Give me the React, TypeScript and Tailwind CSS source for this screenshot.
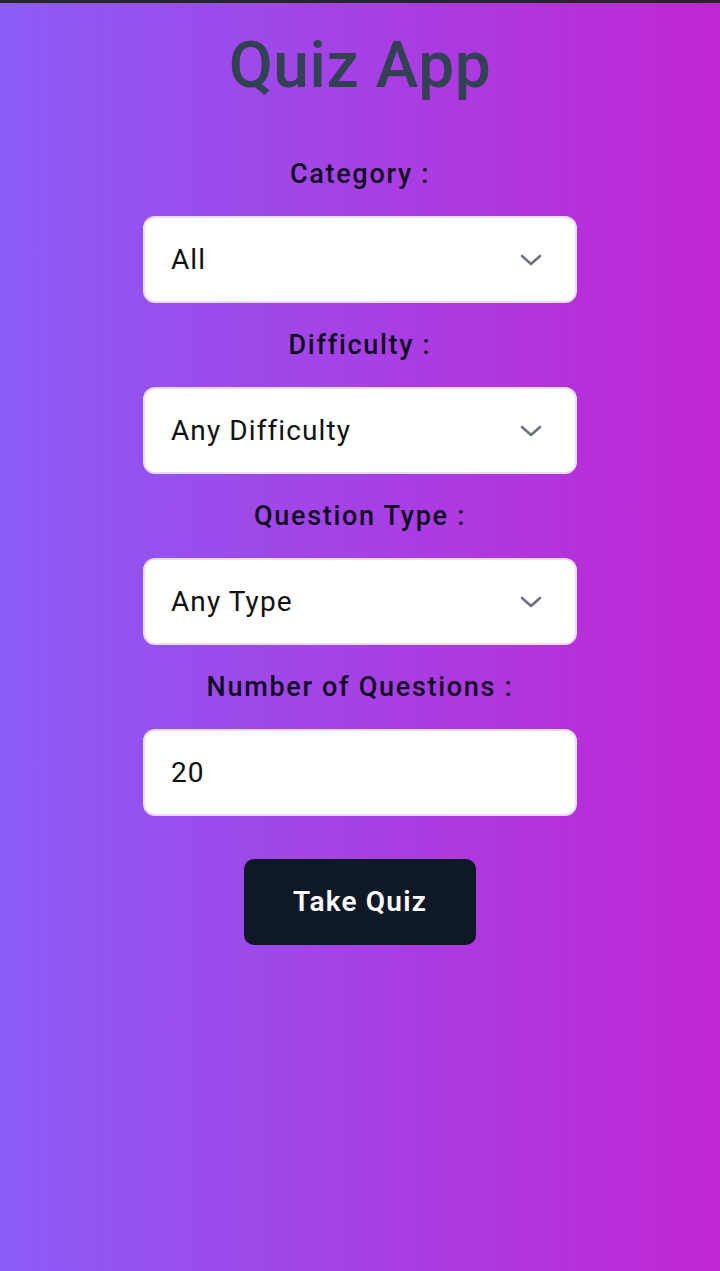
import React from "react";

const font = { fontFamily: "Roboto, 'Noto Sans', sans-serif" };

function Chevron() {
  return (
    <svg width="22" height="12" viewBox="0 0 22 12" className="shrink-0">
      <path
        d="M2 2 L11 10 L20 2"
        fill="none"
        stroke="#6b7280"
        strokeWidth="2.6"
        strokeLinecap="round"
        strokeLinejoin="round"
      />
    </svg>
  );
}

function Field({ label, value, select }: { label: string; value: string; select?: boolean }) {
  return (
    <div className="flex flex-col items-center gap-6">
      <label className="text-[27px] leading-[36px] font-medium tracking-[1.7px] text-[#120a24]">{label}</label>
      <div className="w-[434px] h-[87px] bg-white rounded-xl border-2 border-[#e8dcf8] flex items-center justify-between pl-[26px] pr-[33px]">
        <span className="text-[28px] tracking-[1.1px] text-[#111]">{value}</span>
        {select && <Chevron />}
      </div>
    </div>
  );
}

export default function App() {
  return (
    <div
      className="min-h-[1271px] bg-[linear-gradient(to_right,#8b5cf6,#c026d3)] flex flex-col items-center"
      style={font}
    >
      <div className="w-full h-[3px] bg-[#262626]" />
      <h1 className="mt-[31px] text-[64px] leading-[64px] font-medium tracking-[0.6px] text-[#334155]">Quiz App</h1>

      <div className="mt-[58px] flex flex-col gap-6">
        <Field label="Category :" value="All" select />
        <Field label="Difficulty :" value="Any Difficulty" select />
        <Field label="Question Type :" value="Any Type" select />
        <Field label="Number of Questions :" value="20" />
      </div>

      <button className="mt-[43px] w-[232px] h-[86px] rounded-[10px] bg-[#0f1827] text-white text-[28px] font-semibold tracking-[1.2px]">
        Take Quiz
      </button>
    </div>
  );
}
